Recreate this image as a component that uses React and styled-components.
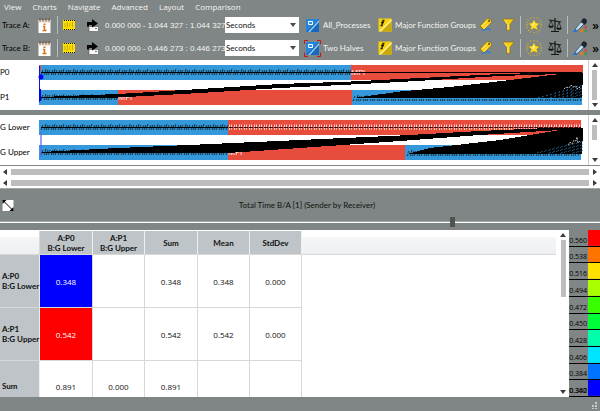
import React from "react";
import styled, { createGlobalStyle } from "styled-components";

const GlobalStyle = createGlobalStyle`
  * {
    box-sizing: border-box;
  }
  body {
    margin: 0;
    background-color: #808685;
    font-family: Lato, "Open Sans", sans-serif;
    font-size: 8px;
    line-height: 11px;
  }
  button, select, input {
    font: inherit;
    margin: 0;
    padding: 0;
    border: 0;
    background: none;
  }
  svg {
    display: block;
    flex-shrink: 0;
  }
`;

const Window = styled.div`
  display: flex;
  flex-direction: column;
  height: 100vh;
  overflow: hidden;
  color: #111;
`;

const MenuBar = styled.nav`
  display: flex;
  gap: 11px;
  height: 13px;
  padding-left: 4px;
  font-family: "Open Sans", "Noto Sans", sans-serif;

  button {
    color: #f4f4f4;
    white-space: nowrap;
    height: 13px;
  }
`;

const Toolbars = styled.div`
  display: flex;
  flex-direction: column;
  height: 47px;
  padding-bottom: 1px;
`;

const Toolbar = styled.div`
  display: flex;
  align-items: center;
  height: 23px;
  padding: 1px 0 0 2px;
  white-space: nowrap;
`;

const TraceLabel = styled.span`
  width: 36px;
  flex-shrink: 0;
  color: #000;
`;

const Tool = styled.button`
  display: flex;
  align-items: center;
  flex-shrink: 0;
  width: ${(props) => props.$width}px;
  height: 18px;
  gap: ${(props) => props.$gap || 0}px;
  color: #f4f4f4;
`;

const Separator = styled.span`
  width: 1px;
  height: 18px;
  margin-right: 5px;
  flex-shrink: 0;
  background-color: #b9bdbd;
`;

const Readout = styled.output`
  width: 120px;
  flex-shrink: 0;
  font-family: "Liberation Sans", Arial, sans-serif;
  color: #f4f4f4;
`;

const UnitBox = styled.span`
  display: flex;
  align-items: center;
  flex-shrink: 0;
  width: 74px;
  height: 16px;
  margin-right: 5px;
  padding-right: 3px;
  background-color: #fff;

  select {
    appearance: none;
    flex: 1;
    height: 16px;
    padding-left: 1px;
    color: #111;
    outline: none;
  }
`;

const More = styled.button`
  flex-shrink: 0;
  margin: 0 1px 0 auto;
  font-family: "Open Sans", "Noto Sans", sans-serif;
  font-size: 12px;
  font-weight: 600;
  color: #000;
`;

const ChartPanel = styled.section`
  display: flex;
  height: 50px;
  flex-shrink: 0;
  background-color: #fff;
`;

const RowLabels = styled.div`
  display: flex;
  flex-direction: column;
  width: 38px;
  flex-shrink: 0;

  span {
    display: flex;
    align-items: center;
    height: 25px;
    white-space: nowrap;
    color: #000;
  }
`;

const Timeline = styled.svg`
  flex: 1;
  min-width: 0;
  height: 50px;
`;

const Splitter = styled.div`
  height: 5px;
  flex-shrink: 0;
  background-color: #808685;
`;

const VScroll = styled.div`
  display: flex;
  flex-direction: column;
  align-items: center;
  justify-content: space-between;
  width: ${(props) => props.$width || 12}px;
  flex-shrink: 0;
  padding: 3px 0;
  border-left: 1px solid ${(props) => props.$edge || "#c9cbd2"};
  background-color: #fff;
`;

const VTrack = styled.div`
  flex: 1;
  width: 5px;
  margin: 3px 0;

  &::before {
    content: "";
    display: block;
    height: ${(props) => props.$thumb}%;
    background-color: #bdbdbd;
  }
`;

const HScrolls = styled.div`
  height: 24px;
  flex-shrink: 0;
  border-top: 1px solid #85858d;
  border-bottom: 1px solid #a5a5a5;
  background-color: #fff;
`;

const HScroll = styled.div`
  display: flex;
  align-items: center;
  gap: 4px;
  height: 11px;
  padding: 0 3px;
`;

const HTrack = styled.div`
  flex: 1;
  height: 6px;
  background-color: #bdbdbd;
`;

const TitleBar = styled.header`
  display: grid;
  grid-template-columns: 30px 1fr 18px;
  align-items: center;
  height: 28px;
  flex-shrink: 0;
  padding: 5px 0 0 2px;

  h1 {
    margin: 0;
    font-size: 8px;
    font-weight: 400;
    text-align: center;
  }
`;

const Slider = styled.input`
  appearance: none;
  display: block;
  width: 100%;
  height: 10px;
  margin-bottom: 3px;
  flex-shrink: 0;
  outline: none;

  &::-webkit-slider-runnable-track {
    height: 10px;
    background: linear-gradient(#0000 4px, #a5a9a8 4px 5px, #fff 5px 6px, #0000 6px);
  }
  &::-webkit-slider-thumb {
    appearance: none;
    width: 5px;
    height: 10px;
    background-color: #505352;
  }
`;

const Results = styled.main`
  display: flex;
  flex: 1;
  min-height: 0;
`;

const TableArea = styled.div`
  flex: 1;
  min-width: 0;
  padding-top: 1px;
  overflow: hidden;
  background: linear-gradient(#fff 7px, #f5f6f8 7px, #eeeff2 24px, #d8d8d8 24px 25px, #fff 25px) no-repeat #fff;
`;

const Matrix = styled.table`
  table-layout: fixed;
  width: 302px;
  border-collapse: separate;
  border-spacing: 0;
  text-align: center;

  th, td {
    height: 53px;
    padding: 0;
    border: 0;
    border-right: 1px solid #d8d8d8;
    border-bottom: 1px solid #d8d8d8;
  }
  th {
    background-color: #bec4c7;
    border-right-color: #eef0f0;
    font-weight: 700;
    line-height: 10px;
    white-space: pre;
  }
  thead th, thead td {
    height: 24px;
  }
  tbody th {
    padding-left: 2px;
    text-align: left;
  }
  tbody tr:last-child > * {
    height: 51px;
  }
`;

const Cell = styled.td`
  background-color: ${(props) => props.$fill || "#fff"};
  color: ${(props) => (props.$fill ? "#fff" : "#111")};
  font-family: "Open Sans", "Noto Sans", sans-serif;
`;

const Legend = styled.aside`
  display: flex;
  flex-direction: column;
  width: 31px;
  flex-shrink: 0;
  font-family: "Open Sans", "Noto Sans", sans-serif;
  font-size: 7px;
`;

const LegendStep = styled.div`
  position: relative;
  display: flex;
  flex: 1;
  align-items: flex-end;
  justify-content: flex-end;
  padding-right: 13px;
  border-bottom: 1px solid #000;
  background: linear-gradient(${(props) => props.$color} 0 0) right / 12px 100% no-repeat;
  color: #000;
`;

const LegendMin = styled.span`
  position: absolute;
  right: 13px;
  bottom: 0;
`;

const StatusBar = styled.footer`
  display: flex;
  align-items: flex-end;
  justify-content: flex-end;
  height: 14px;
  flex-shrink: 0;
  padding: 2px;
`;

const arrows = {
  up: "M0 4 L3 0 L6 4 Z",
  down: "M0 0 L6 0 L3 4 Z",
  left: "M4 0 L4 6 L0 3 Z",
  right: "M0 0 L4 3 L0 6 Z",
};

const Arrow = ({ to }) => {
  const upright = to === "up" || to === "down";
  return (
    <button type="button" aria-label={`Scroll ${to}`}>
      <svg width={upright ? 6 : 4} height={upright ? 4 : 6} fill="#3c3c3c">
        <path d={arrows[to]} />
      </svg>
    </button>
  );
};

const InfoIcon = () => (
  <svg width="13" height="15" viewBox="0 0 13 15">
    <path d="M.500 2h12v13H.500z" fill="#fff" />
    <path d="M.500 2h12v2.500H.500z" fill="#e8d5c0" />
    <path d="M2 0v3.500M5 0v3.500M8 0v3.500M11 0v3.500" stroke="#735a46" />
    <path d="M5.500 5.500h2v1.500h-2z" fill="#d27512" />
    <path d="M5 8.500h1.500v4M4.500 12.500h4" stroke="#d27512" fill="none" strokeWidth="1.500" />
  </svg>
);

const FilmIcon = () => (
  <svg width="13" height="12" viewBox="0 0 13 12">
    <path d="M0 1h12v10H0z" fill="#1c1a00" />
    <path d="M0 2h12v8H0z" fill="#ffe000" />
    <path d="M2 4v4M4.500 3v4l-1 2M7 4v4M9.500 3v5" stroke="#a89200" strokeWidth=".7" fill="none" />
    <path d="M0 1.500h12M0 10.500h12" stroke="#f5d800" strokeDasharray="1 1" />
  </svg>
);

const ExportIcon = () => (
  <svg width="14" height="15" viewBox="0 0 14 15">
    <path d="M3 8.500h9.500v5H3z" fill="#f8f8f8" stroke="#444" strokeWidth=".5" />
    <path d="M9 10h2v1H9z" fill="#777" />
    <path d="M1 8.500V4h5V1l6 4.500-6 4V7H3v1.500z" fill="#050505" />
  </svg>
);

const ProcessIcon = ({ marked }) => (
  <svg width="17" height="17" viewBox="0 0 17 17">
    <path d="M2 2h13v13H2z" fill="#2585dc" />
    <path d="M2 15h13V2z" fill="#1869bd" />
    <path d="M4 15L15 3v2L6 15z" fill="#9dcdf3" />
    <path d="M4.500 4.500h4v3h-4z" fill="#2c91eb" stroke="#fff" />
    {marked && (
      <path d="M.500 4V.500H4M13 .500h3.500V4M16.500 12.500v4H13M4 16.500H.500v-4" fill="none" stroke="#c91515" />
    )}
  </svg>
);

const FunctionIcon = () => (
  <svg width="14" height="14" viewBox="0 0 14 14">
    <path d="M.500 .500h13v13h-13z" fill="#f4d30d" />
    <path d="M3 13.500L13.500 3v10.500z" fill="#caa90a" />
    <path d="M1 13.500L13.500 1v2L3 13.500z" fill="#fff0a0" />
    <path d="M6.500 2.500H5L4 7.500H2.500M3 4.500h3" stroke="#292000" fill="none" strokeWidth="1.300" />
  </svg>
);

const TagIcon = () => (
  <svg width="14" height="16" viewBox="0 0 14 16">
    <path d="M1 9L8 1.500l4 1 .5 3L5 13z" fill="#f7cf18" stroke="#6b5200" strokeWidth=".5" />
    <path d="M3 9l4-4M5 11l4-4" stroke="#fff2a0" strokeWidth=".7" />
    <circle cx="10" cy="4" r="1" fill="#635115" />
    <path d="M3 14c2-3 3 0 5-2s2 2 4 1" stroke="#2d7be0" fill="none" strokeWidth="1.300" />
  </svg>
);

const FunnelIcon = () => (
  <svg width="13" height="14" viewBox="0 0 13 14">
    <path d="M.500 1h11.500L8 6.500v5.500l-3 1V6.500z" fill="#f5cd12" stroke="#826706" strokeWidth=".6" />
    <path d="M2.500 2.500l3.500 4v5" stroke="#fff0a0" fill="none" />
  </svg>
);

const StarIcon = () => (
  <svg width="16" height="16" viewBox="0 0 16 16">
    <path
      d="M8 0v1M8 15v1M0 8h1.500M14.500 8H16M1.500 2.500l1 1M13 13l1 1M14.500 2.500l-1 1M2 14l1-1M4.500 .500l.5 1M11.500 .500l-.5 1M4.500 15.500l.5-1M11.500 15.500l-.5-1M.500 5l1 .5M15.500 5l-1 .5M.500 11l1-.5M15.500 11l-1-.5"
      stroke="#e8c31a"
    />
    <path d="M8 2.500l1.700 3.500 3.800.500-2.800 2.500.8 4L8 11l-3.500 2 .8-4-2.800-2.500 3.800-.500z" fill="#ffdf27" stroke="#b58d12" strokeWidth=".4" />
    <path d="M8 4.500L6.500 8l1.500 1z" fill="#fff9be" />
  </svg>
);

const ScalesIcon = () => (
  <svg width="14" height="16" viewBox="0 0 14 16" fill="none" stroke="#171717">
    <path d="M7 1v13M3 14.500h8M1 3l12 2" strokeWidth="1.200" />
    <path d="M3 3.500L1 9M3 3.500L5 9M11 5L9 11M11 5l2 6" strokeWidth=".7" />
    <path d="M.500 9h5l-1 1.500h-3zM8.500 11h5l-1 1.500h-3z" fill="#171717" strokeWidth=".5" />
  </svg>
);

const DropperIcon = () => (
  <svg width="15" height="15" viewBox="0 0 15 15">
    <path d="M9 1.500L11 0l3 2-.5 3-2 2L8 4z" fill="#20272b" />
    <path d="M8 4l3 2-6 6-3 1 1-3z" fill="#b9dff5" stroke="#254159" strokeWidth=".7" />
    <path d="M0 14c1-3 4-2 4 0z" fill="#1878e0" />
    <path d="M7 11h3v3H7z" fill="#e97716" />
    <path d="M11.500 8h2.500v2.500h-2.500z" fill="#d44747" />
    <path d="M11.500 11.500h2.500V14h-2.500z" fill="#3c9a49" />
  </svg>
);

const CornerIcon = () => (
  <svg width="12" height="13" viewBox="0 0 12 13">
    <path d="M.500 1h11v11H.500z" fill="#fff" />
    <path d="M1 1.500l10 10" stroke="#000" />
    <path d="M.500 1h4L.500 5zM11.500 12h-4l4-4z" fill="#000" />
  </svg>
);

const TraceToolbar = ({ trace, range, processes, marked }) => (
  <Toolbar role="toolbar" aria-label={`Trace ${trace}`}>
    <TraceLabel>Trace {trace}:</TraceLabel>
    <Tool type="button" aria-label="Trace info" $width={19}><InfoIcon /></Tool>
    <Separator />
    <Tool type="button" aria-label="Select time range" $width={23}><FilmIcon /></Tool>
    <Tool type="button" aria-label="Export" $width={19}><ExportIcon /></Tool>
    <Readout>{range}</Readout>
    <UnitBox>
      <select aria-label={`Trace ${trace} unit`} defaultValue="Seconds">
        <option>Seconds</option>
        <option>Ticks</option>
      </select>
      <svg width="6" height="4" fill="#4b4b4b">
        <path d={arrows.down} />
      </svg>
    </UnitBox>
    <Tool type="button" $width={74} $gap={2}><ProcessIcon marked={marked} />{processes}</Tool>
    <Tool type="button" $width={101} $gap={3}><FunctionIcon />Major Function Groups</Tool>
    <Tool type="button" aria-label="Tagging" $width={23}><TagIcon /></Tool>
    <Tool type="button" aria-label="Filter" $width={18}><FunnelIcon /></Tool>
    <Separator />
    <Tool type="button" aria-label="Idealize" $width={22}><StarIcon /></Tool>
    <Tool type="button" aria-label="Imbalance" $width={19}><ScalesIcon /></Tool>
    <Separator />
    <Tool type="button" aria-label="Colors" $width={16}><DropperIcon /></Tool>
    <More type="button" aria-label="More tools">»</More>
  </Toolbar>
);

const BLUE = "#3498db";
const RED = "#e74c3c";

// short strokes crossing an event line, one every two or three pixels
const hatch = (from, to, y) => {
  let d = "";
  for (let x = from, i = 0; x < to; x += 2 + (i % 3 === 0 ? 1 : 0), i++) {
    d += `M${x} ${y + 3}l1 -2M${x + 1} ${y}l1 -${2 + (i % 4 === 1 ? 1 : 0)}`;
  }
  return d;
};

// loose message ends at the right side of the fan
const fray = (from, to, top, bottom) => {
  let d = "";
  for (let x = from, i = 0; x < to; x += 2, i++) {
    const start = bottom - ((bottom - top) * (x - from)) / (to - from);
    for (let y = start; y < bottom; y += 3) {
      const shift = (i * 7 + Math.round(y) * 5) % 3;
      d += `M${x + shift} ${Math.round(y)}l${1 + (i % 2)} -1`;
    }
  }
  return d;
};

const PanelA = () => (
  <Timeline viewBox="38 60 550 50" preserveAspectRatio="none" role="img" aria-label="Timeline of trace A">
    <path d="M39 65h312v15H39zM39 90h79v15H39zM352 90h230v15H352z" fill={BLUE} />
    <path d="M351 65h232v15H351zM118 90h234v15H118zM39 65h2v6h-2z" fill={RED} />
    <g fill="#fff" fontSize="8" fontFamily="Open Sans, sans-serif">
      <text x="351" y="75">MPI</text>
      <text x="118" y="100">MPI</text>
    </g>
    <g stroke="#14343f" fill="none">
      <path d={hatch(41, 350, 72)} />
      <path d={hatch(41, 118, 97)} />
      <path d={hatch(353, 581, 98)} />
    </g>
    <path d="M41 72.500H582" stroke="#000" />
    <path
      d="M41 97L118 94L200 89L280 84L351 81.500L400 79L500 74L560 72.500H583L582 98H353L400 91.500L450 87L510 80L560 74L500 76L400 82L351 84.500L280 88L200 93L118 97.500L41 98.500Z"
      shapeRendering="crispEdges"
    />
    <path d={fray(534, 581, 86, 99)} stroke="#266d9f" strokeWidth=".7" fill="none" />
    <path d="M564 89l2-2 3 1 2-3 2 2 3-1 1 3 2-2 2 2" stroke="#b9babc" fill="none" strokeDasharray="2 1" />
    <path d="M39.500 66v36" stroke="#1414e8" />
    <path d="M40 89v12" stroke="#0000f0" strokeWidth="2" />
    <circle cx="41" cy="77" r="2.500" fill="#0000ff" />
  </Timeline>
);

const PanelB = () => (
  <Timeline viewBox="38 115 550 50" preserveAspectRatio="none" role="img" aria-label="Timeline of trace B">
    <path d="M39 120h189v15H39zM39 145h189v15H39zM405 145h176v15H405z" fill={BLUE} />
    <path d="M228 120h353v15H228zM228 145h177v15H228z" fill={RED} />
    <text x="228" y="155" fill="#fff" fontSize="8" fontFamily="Open Sans, sans-serif">MPI</text>
    <g stroke="#14343f" fill="none">
      <path d={hatch(41, 227, 127)} />
      <path d={hatch(41, 228, 152)} />
      <path d={hatch(407, 580, 153)} />
    </g>
    <path d="M229 127H581" stroke="#ffd3d8" strokeWidth="5" strokeDasharray="1 1 1 2" />
    <path d="M229 129.500H581" stroke="#ffe87a" strokeDasharray="1 4" />
    <path d="M229 127.500H581" stroke="#3a1010" strokeDasharray="4 1" />
    <path d="M41 127.500H228" stroke="#000" />
    <path
      d="M41 152L118 148L200 144.500L300 140L400 135.500L480 131L560 127.500H583L582 154H407L430 148L500 140L560 130L480 135L400 141L300 148L228 153L41 153.500Z"
      shapeRendering="crispEdges"
    />
    <path d={fray(534, 581, 142, 154)} stroke="#266d9f" strokeWidth=".7" fill="none" />
    <path d="M568 145l2-3 2 2 2-4 2 1 1-4 1 6 2-2" stroke="#b9babc" fill="none" strokeDasharray="2 1" />
    <path d="M41 132v25" stroke="#6161f0" strokeWidth="2" opacity=".6" />
  </Timeline>
);

const columns = ["A:P0\nB:G Lower", "A:P1\nB:G Upper", "Sum", "Mean", "StdDev"];

const rows = [
  { name: "A:P0\nB:G Lower", values: ["0.348", "", "0.348", "0.348", "0.000"], fill: "#0000ff" },
  { name: "A:P1\nB:G Upper", values: ["0.542", "", "0.542", "0.542", "0.000"], fill: "#ff0000" },
  { name: "Sum", values: ["0.891", "0.000", "0.891", "", ""] },
];

const legend = [
  ["0.560", "#ff0000"],
  ["0.538", "#ff7300"],
  ["0.516", "#ffe100"],
  ["0.494", "#aaff00"],
  ["0.472", "#38ff00"],
  ["0.450", "#00ff38"],
  ["0.428", "#00ffaa"],
  ["0.406", "#00e5ff"],
  ["0.384", "#0073ff"],
  ["0.362", "#0000ff"],
];

const App = () => {
  return (
    <Window>
      <GlobalStyle />
      <MenuBar>
        {["View", "Charts", "Navigate", "Advanced", "Layout", "Comparison"].map((item) => (
          <button type="button" key={item}>{item}</button>
        ))}
      </MenuBar>
      <Toolbars>
        <TraceToolbar trace="A" range="0.000 000 - 1.044 327 : 1.044 327" processes="All_Processes" />
        <TraceToolbar trace="B" range="0.000 000 - 0.446 273 : 0.446 273" processes="Two Halves" marked />
      </Toolbars>
      <ChartPanel>
        <RowLabels><span>P0</span><span>P1</span></RowLabels>
        <PanelA />
        <VScroll>
          <Arrow to="up" />
          <VTrack $thumb={100} />
          <Arrow to="down" />
        </VScroll>
      </ChartPanel>
      <Splitter />
      <ChartPanel>
        <RowLabels><span>G Lower</span><span>G Upper</span></RowLabels>
        <PanelB />
        <VScroll>
          <Arrow to="up" />
          <VTrack $thumb={50} />
          <Arrow to="down" />
        </VScroll>
      </ChartPanel>
      <HScrolls>
        {["a", "b"].map((trace) => (
          <HScroll key={trace}>
            <Arrow to="left" />
            <HTrack />
            <Arrow to="right" />
          </HScroll>
        ))}
      </HScrolls>
      <TitleBar>
        <button type="button" aria-label="Swap axes"><CornerIcon /></button>
        <h1>Total Time B/A [1] (Sender by Receiver)</h1>
      </TitleBar>
      <Slider type="range" min="0" max="1000" defaultValue="756" aria-label="Color scale range" />
      <Results>
        <TableArea>
          <Matrix>
            <colgroup>
              <col width="40" />
              <col width="53" />
              <col width="52" />
              <col width="53" />
              <col width="52" />
              <col width="52" />
            </colgroup>
            <thead>
              <tr>
                <td />
                {columns.map((name) => <th scope="col" key={name}>{name}</th>)}
              </tr>
            </thead>
            <tbody>
              {rows.map((row) => (
                <tr key={row.name}>
                  <th scope="row">{row.name}</th>
                  {row.values.map((value, i) => (
                    <Cell key={i} $fill={i === 0 ? row.fill : undefined}>{value}</Cell>
                  ))}
                </tr>
              ))}
            </tbody>
          </Matrix>
        </TableArea>
        <VScroll $width={13} $edge="#fff">
          <Arrow to="up" />
          <VTrack $thumb={39} />
          <Arrow to="down" />
        </VScroll>
        <Legend>
          {legend.map(([value, color], i) => (
            <LegendStep key={value} $color={color}>
              {value}
              {i === legend.length - 1 && <LegendMin>0.340</LegendMin>}
            </LegendStep>
          ))}
        </Legend>
      </Results>
      <StatusBar>
        <svg width="7" height="7" fill="#c6caca">
          <path d="M4 0h2v2H4zM4 3h2v2H4zM1 3h2v2H1zM4 6h2v1H4zM1 6h2v1H1z" />
        </svg>
      </StatusBar>
    </Window>
  );
};

export default App;
